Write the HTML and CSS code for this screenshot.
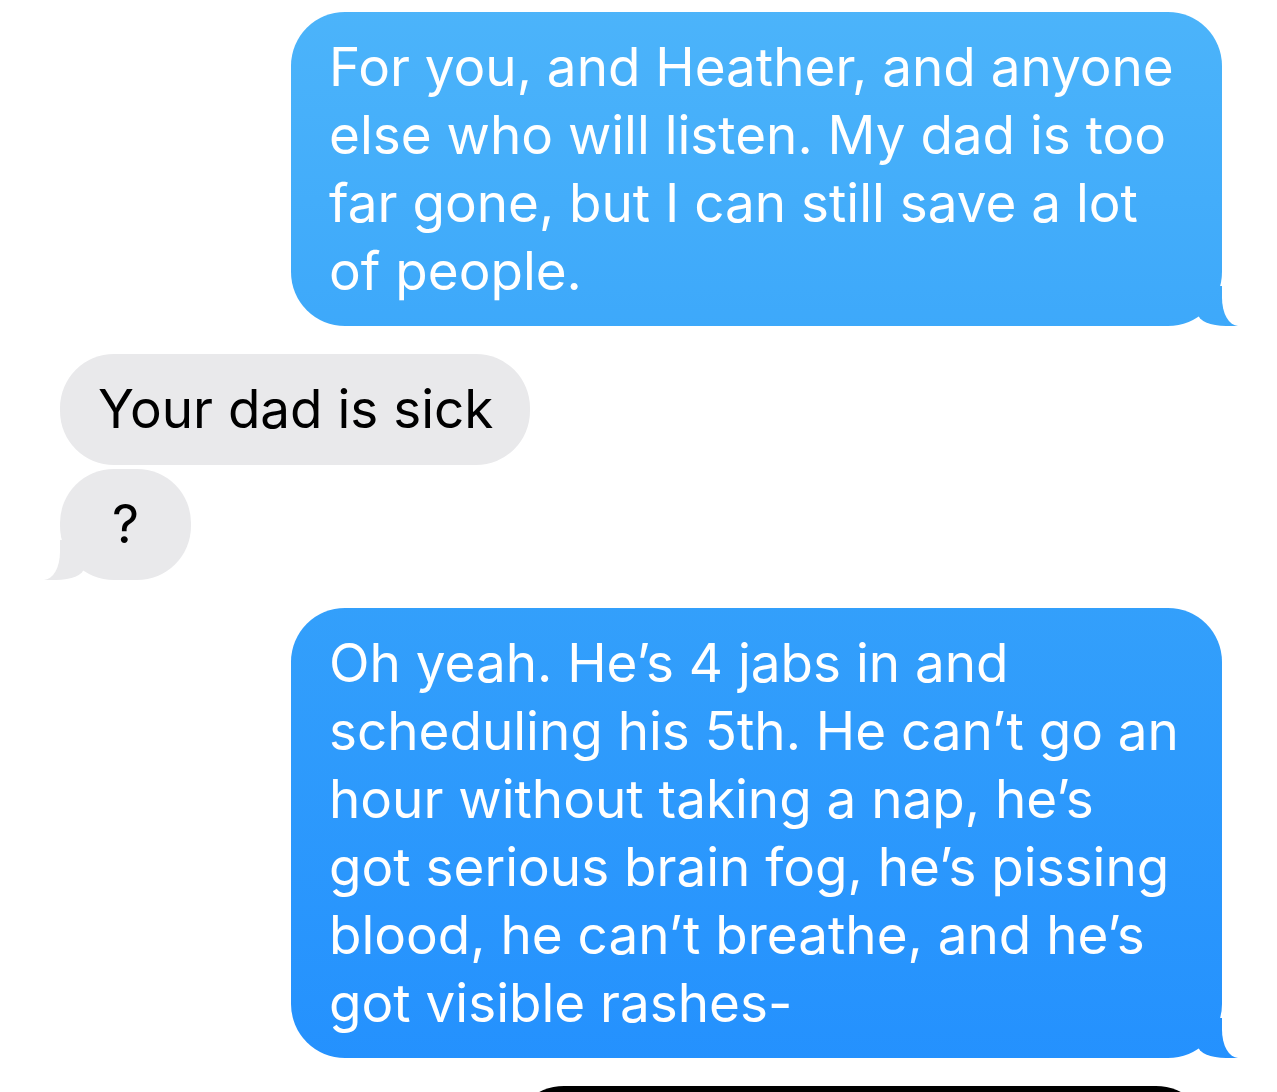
FILE: index.html
```html
<!DOCTYPE html>
<html lang="en">
<head>
    <meta charset="UTF-8">
    <title>Messages</title>
    <link rel="stylesheet" href="styles.css">
</head>
<body>
    <div class="thread">
        <div class="row row-sent">
            <div class="bubble sent tail">For you, and Heather, and anyone<br>else who will listen. My dad is too<br>far gone, but I can still save a lot<br>of people.</div>
        </div>
        <div class="row row-received gap-big">
            <div class="bubble received">Your dad is sick</div>
        </div>
        <div class="row row-received gap-small">
            <div class="bubble received tail q">?</div>
        </div>
        <div class="row row-sent gap-big">
            <div class="bubble sent tail">Oh yeah. He&rsquo;s 4 jabs in and<br>scheduling his 5th. He can&rsquo;t go an<br>hour without taking a nap, he&rsquo;s<br>got serious brain fog, he&rsquo;s pissing<br>blood, he can&rsquo;t breathe, and he&rsquo;s<br>got visible rashes-</div>
        </div>
        <div class="row row-sent gap-big">
            <div class="bubble dark"></div>
        </div>
    </div>
</body>
</html>
```

FILE: styles.css
```css
html, body { margin: 0; padding: 0; background: #fff; }
body { width: 1277px; height: 1092px; overflow: hidden; font-family: "Inter", "Liberation Sans", sans-serif; }

.thread { display: flex; flex-direction: column; padding: 12px 55px 0 60px; }
.row { display: flex; }
.row-sent { justify-content: flex-end; }
.row-received { justify-content: flex-start; }
.gap-big { margin-top: 28px; }
.gap-small { margin-top: 4px; }

.bubble { position: relative; font-size: 53px; line-height: 68px; white-space: nowrap; padding: 21px 37px 21px 38px; border-radius: 54px; }

.sent { width: 931px; box-sizing: border-box; color: #fff; background: linear-gradient(180deg, #4cb4fa 0px, #3aa6fa 400px, #2390fe 1092px) fixed; }
.received { color: #000; background: #e9e9eb; padding-bottom: 22px; }
.q { padding-left: 52px; padding-right: 52px; }

/* tail: a coloured blob, then a white bite taken out of it */
.tail::before, .tail::after { content: ""; position: absolute; bottom: 0; height: 40px; }
.sent.tail::before { right: -16px; width: 40px; background: inherit; border-bottom-left-radius: 28px 12px; }
.sent.tail::after { right: -40px; width: 40px; background: #fff; border-bottom-left-radius: 16px 28px; }
.received.tail::before { left: -16px; width: 40px; background: #e9e9eb; border-bottom-right-radius: 28px 12px; }
.received.tail::after { left: -40px; width: 40px; background: #fff; border-bottom-right-radius: 16px 28px; }

.dark { width: 700px; height: 200px; padding: 0; margin-right: 12px; background: #000; border-radius: 54px; }
```
